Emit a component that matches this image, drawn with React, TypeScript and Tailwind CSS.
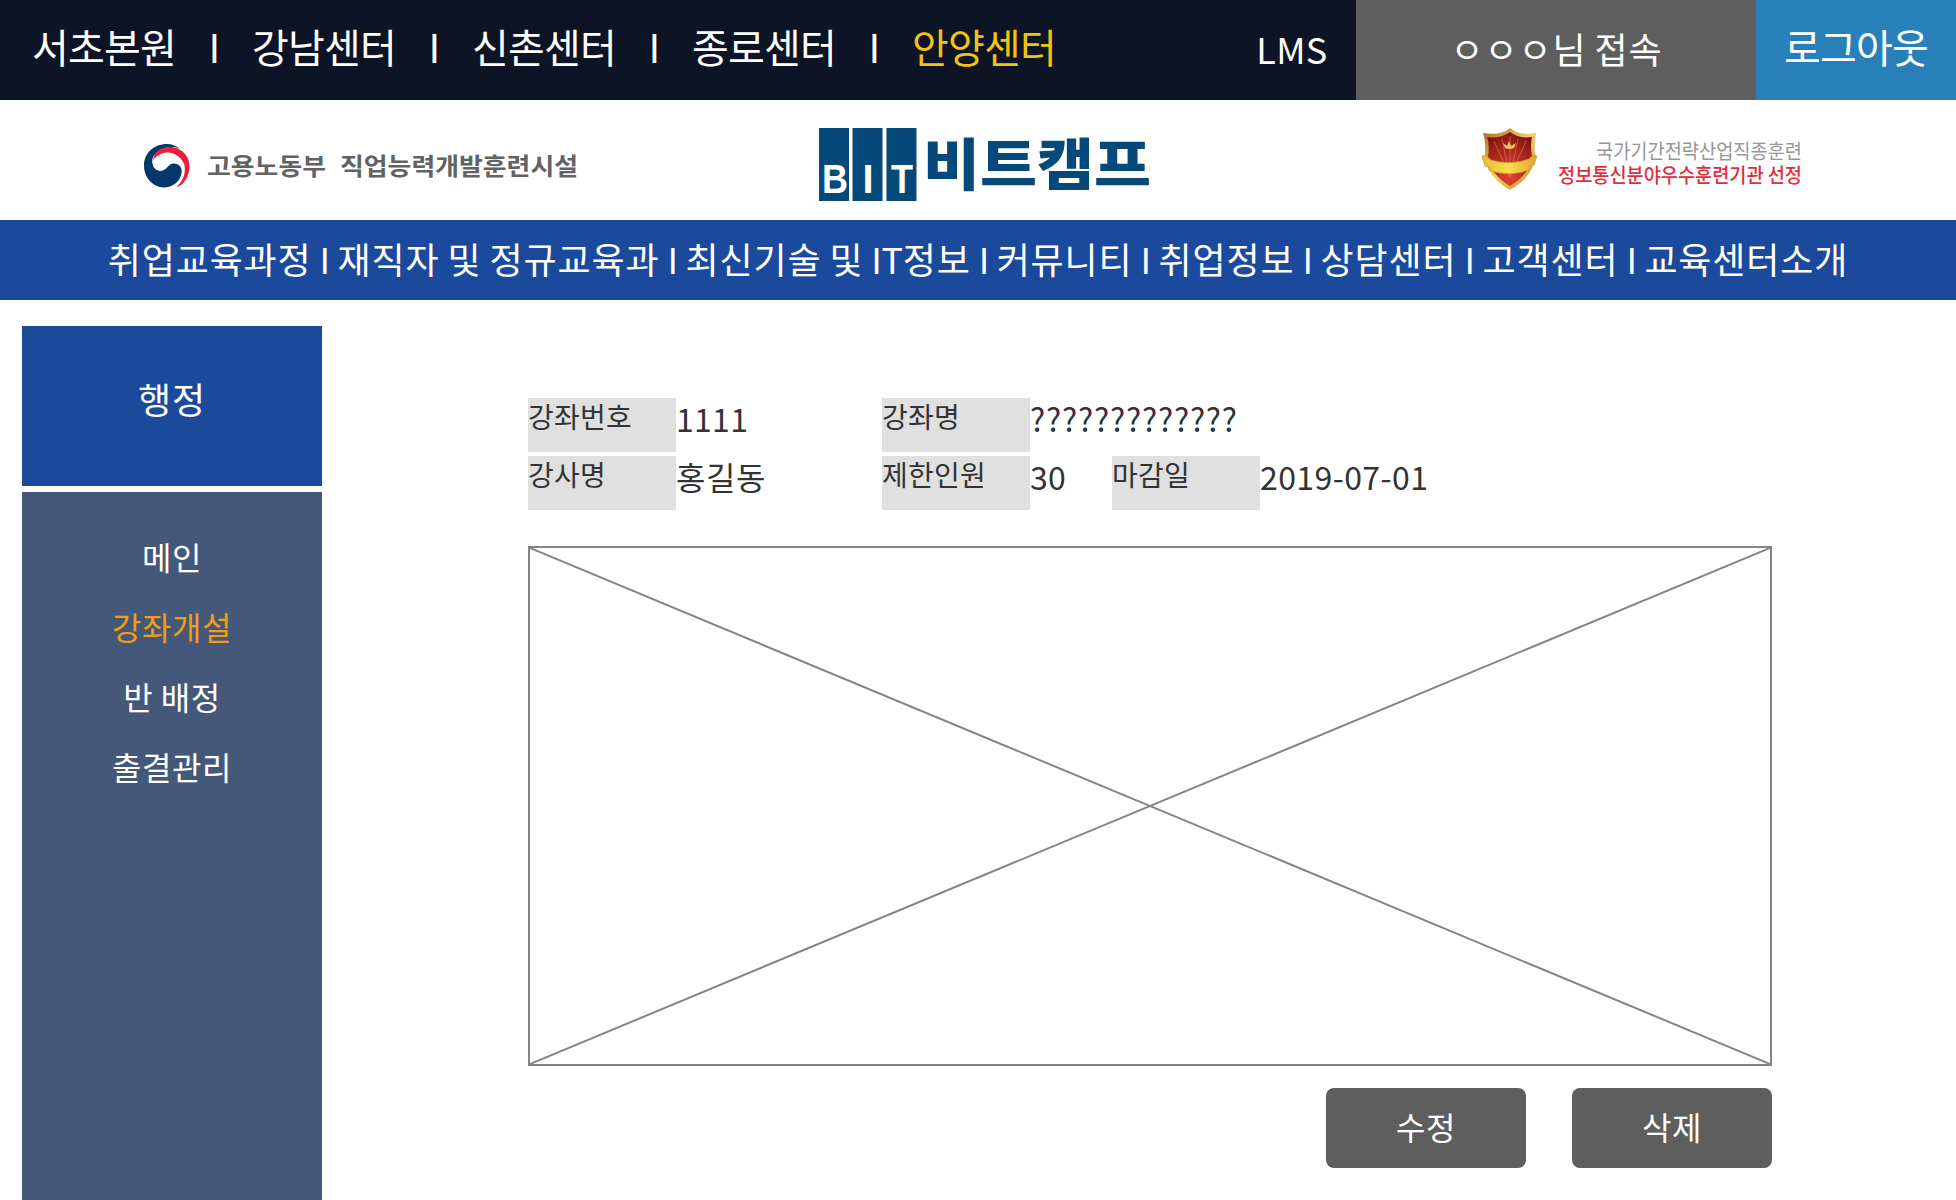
import React from "react";

const centers = ["서초본원", "강남센터", "신촌센터", "종로센터", "안양센터"];
const menu: { key: string; label: React.ReactNode }[] = [
  { key: "jobs", label: "취업교육과정" },
  { key: "regular", label: "재직자 및 정규교육과" },
  { key: "tech", label: <>최신기술 및 <span className="tracking-[-0.4px]">IT</span>정보</> },
  { key: "community", label: "커뮤니티" },
  { key: "info", label: "취업정보" },
  { key: "consult", label: "상담센터" },
  { key: "support", label: "고객센터" },
  { key: "about", label: "교육센터소개" },
];
const sideItems = ["메인", "강좌개설", "반 배정", "출결관리"];

function TopBar() {
  return (
    <div className="flex h-[100px] bg-[#0c1426] text-white">
      <ul className="flex flex-1 items-center pb-2 pl-8 text-[40px] leading-[92px] tracking-[-0.8px]">
        {centers.map((c, i) => (
          <React.Fragment key={c}>
            {i > 0 && <li className="w-[76px] text-center">I</li>}
            <li className={i === 4 ? "w-36 whitespace-nowrap text-[#f1c40f]" : "w-36 whitespace-nowrap"}>{c}</li>
          </React.Fragment>
        ))}
      </ul>
      <div className="flex w-[128px] items-center justify-center pb-[5px] text-[36px] tracking-[0.4px]">LMS</div>
      <div className="flex w-[400px] items-center justify-center bg-[#5e5e5e] pb-[5px] pl-px text-[36px] tracking-[0.88px] [word-spacing:-0.9px]">ㅇㅇㅇ님 접속</div>
      <div className="flex w-[200px] items-center justify-center bg-[#2980b9] pb-2 text-[40px] tracking-[-0.8px]">로그아웃</div>
    </div>
  );
}

function MinistryLogo() {
  return (
    <svg className="overflow-visible" width="440" height="56" viewBox="0 0 440 56">
      <path d="M37 6C28 1 15 6 10 14C8 20 10 27 17 28C24 28 25 20 31 20.500C38 21 40 27 38 32C36 40 29 44 21 44.500C9 44 1 34 1 22.500C1 10 11 1 24 1C29 1 34 3 37 6Z" fill="#03396a" />
      <path d="M10 17C11 9 18 3.500 27 4C38 4 47 13 46.500 24C46 34 41 42 33 44.500C40 38 43 31 41.500 22C38 11 22 3 10 17Z" fill="#ee1c3c" />
      <g fill="#626264" fontSize="24" fontWeight="700">
        <text x="64" y="32" textLength="119" lengthAdjust="spacingAndGlyphs">고용노동부</text>
        <text x="197" y="32" textLength="238" lengthAdjust="spacingAndGlyphs">직업능력개발훈련시설</text>
      </g>
    </svg>
  );
}

function BitLogo() {
  return (
    <svg className="overflow-visible" width="336" height="76" viewBox="0 0 336 76">
      <g fill="#05487a">
        <rect x="1" y="1" width="30" height="73" />
        <rect x="34.500" y="1" width="30" height="73" />
        <rect x="68.500" y="1" width="30" height="73" />
        <text x="105" y="57.500" fontSize="56" fontWeight="900" textLength="228" lengthAdjust="spacingAndGlyphs">비트캠프</text>
      </g>
      <g fill="#fff" fontFamily="Liberation Sans" fontSize="40" fontWeight="700" textAnchor="middle">
        <text x="17" y="66" textLength="26" lengthAdjust="spacingAndGlyphs">B</text>
        <text x="50" y="66">I</text>
        <text x="84" y="66" textLength="22" lengthAdjust="spacingAndGlyphs">T</text>
      </g>
    </svg>
  );
}

function AwardLogo() {
  return (
    <svg className="overflow-visible" width="324" height="68" viewBox="0 0 324 68">
      <defs>
        <linearGradient id="gold" x1="0" y1="0" x2="1" y2="1">
          <stop offset="0" stopColor="#a96a1c" />
          <stop offset=".5" stopColor="#f2cd6a" />
          <stop offset="1" stopColor="#c58a25" />
        </linearGradient>
        <radialGradient id="red" cx=".5" cy=".8" r=".8">
          <stop offset="0" stopColor="#e8412f" />
          <stop offset="1" stopColor="#80150f" />
        </radialGradient>
        <linearGradient id="ribbon" x1="0" x2="1">
          <stop offset="0" stopColor="#e9b83a" />
          <stop offset=".5" stopColor="#f8dd50" />
          <stop offset="1" stopColor="#dba52b" />
        </linearGradient>
      </defs>
      <path d="M29 1Q38 9 55 6Q53 15 54 29Q53 49 29 63Q5 49 4 29Q5 15 2 6Q20 9 29 1Z" fill="url(#gold)" />
      <path d="M29 5Q38 12 51 10Q49 18 51 30Q49 47 29 59Q9 47 7 30Q9 18 6 10Q20 12 29 5Z" fill="url(#red)" />
      <path d="M29 50L13 14M29 50L21 12M29 50V9M29 50L37 12M29 50L45 14" stroke="#f0836a" opacity=".55" />
      <path d="M22 16L26 19L28 14L30 19L35 16L33 21Q28 23 24 21Z" fill="#f5c75b" />
      <path d="M1 29Q4 27 10 33Q29 39 48 32Q53 26 56 29L53 38L50 39V42Q29 51 8 43V40L4 39Z" fill="url(#ribbon)" stroke="#ce9830" strokeWidth=".7" />
      <text x="115" y="31.500" fill="#969696" fontSize="20.500" textLength="206" lengthAdjust="spacingAndGlyphs">국가기간전략산업직종훈련</text>
      <text x="77" y="55.500" fill="#e22d3d" fontSize="20.500" fontWeight="500" textLength="244" lengthAdjust="spacingAndGlyphs">정보통신분야우수훈련기관 선정</text>
    </svg>
  );
}

function Field({ label, value, className, tracking = "tracking-[0.3px]" }: { label: string; value: string; className: string; tracking?: string }) {
  return (
    <div className={`flex h-[54px] text-[#333] ${className}`}>
      <div className="w-[148px] bg-[#e0e0e0] text-[28px] leading-9 tracking-[0.24px]">{label}</div>
      <div className={`text-[32px] leading-10 whitespace-nowrap ${tracking}`}>{value}</div>
    </div>
  );
}

export default function App() {
  return (
    <div className="flex h-[1200px] w-[1956px] flex-col overflow-hidden bg-white font-['Noto_Sans_CJK_KR',sans-serif]">
      <TopBar />
      <header className="flex h-[120px] items-start pt-[27px] pl-[143px]">
        <div className="w-[440px] pt-[16px]"><MinistryLogo /></div>
        <div className="ml-[235px] w-[336px]"><BitLogo /></div>
        <div className="ml-[327px] w-[324px]"><AwardLogo /></div>
      </header>
      <nav className="flex h-20 items-center justify-center bg-[#1b4a9c] pb-[5px] text-[36px] text-white">
        <p className="tracking-[0.87px] whitespace-nowrap [word-spacing:-0.95px]">
          {menu.map((m, i) => (
            <React.Fragment key={m.key}>
              {i > 0 && <> <span className="tracking-[-0.55px]">I</span> </>}
              {m.label}
            </React.Fragment>
          ))}
        </p>
      </nav>
      <main className="flex flex-1 pt-[26px] pl-[22px]">
        <aside className="flex w-[300px] flex-col gap-1.5 text-white">
          <h1 className="flex h-40 items-center justify-center bg-[#1b4a9c] pb-[17px] text-[36px] tracking-[0.88px]">행정</h1>
          <ul className="h-[708px] bg-[#44597a] pt-[29px] text-center text-[32px] leading-[70px] tracking-[0.56px]">
            {sideItems.map((s, i) => (
              <li key={s} className={i === 1 ? "text-[#f39c12]" : ""}>{s}</li>
            ))}
          </ul>
        </aside>
        <section className="ml-[206px] w-[1244px] pt-[72px]">
          <div className="flex flex-col gap-1">
            <div className="flex">
              <Field label="강좌번호" value="1111" className="w-[354px]" />
              <Field label="강좌명" value="?????????????" className="w-[500px]" tracking="tracking-[0.82px]" />
            </div>
            <div className="flex">
              <Field label="강사명" value="홍길동" className="w-[354px]" tracking="tracking-[0.56px]" />
              <Field label="제한인원" value="30" className="w-[230px]" />
              <Field label="마감일" value="2019-07-01" className="w-[400px]" tracking="tracking-[0.4px]" />
            </div>
          </div>
          <div className="mt-9 h-[520px] border-2 border-[#848484]">
            <svg className="h-full w-full" viewBox="0 0 1240 516" preserveAspectRatio="none" stroke="#848484" strokeWidth="2">
              <path d="M0 0L1240 516M1240 0L0 516" />
            </svg>
          </div>
          <div className="mt-[22px] flex justify-end gap-[46px] text-[32px] text-white">
            <button className="h-20 w-[200px] rounded-lg bg-[#5e5e5e] pb-1 tracking-[0.56px]">수정</button>
            <button className="h-20 w-[200px] rounded-lg bg-[#5e5e5e] pb-1 tracking-[0.56px]">삭제</button>
          </div>
        </section>
      </main>
    </div>
  );
}
